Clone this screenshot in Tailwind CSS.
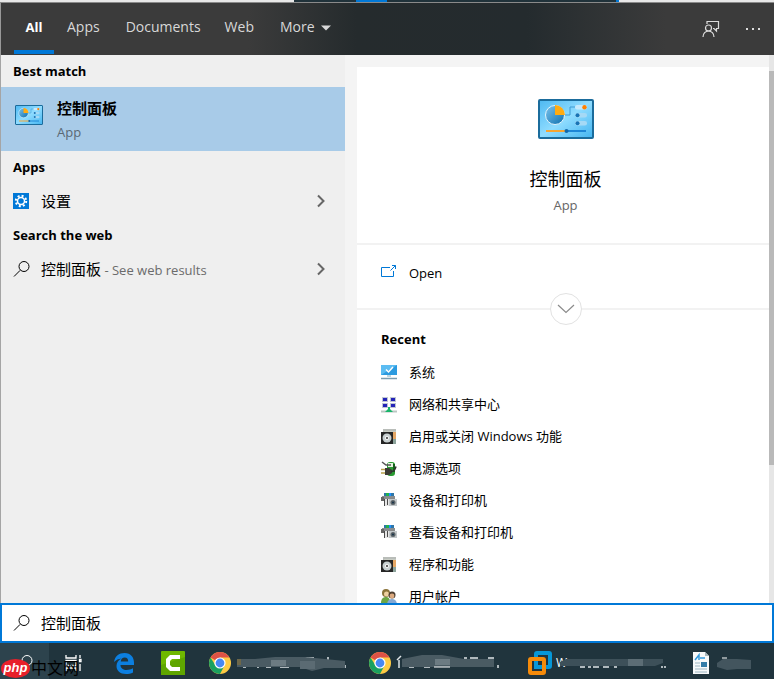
<!DOCTYPE html>
<html lang="en">
<head>
    <meta charset="UTF-8">
    <meta name="viewport" content="width=device-width, initial-scale=1.0">
    <title>Search</title>
    <script src="https://cdn.jsdelivr.net/npm/@tailwindcss/browser@4"></script>
</head>
<body class="font-['Open_Sans','Noto_Sans_CJK_SC',sans-serif] text-[13px] text-black">
    <!-- Shared icons -->
    <svg class="absolute h-0 w-0">
        <symbol id="chevron" viewBox="0 0 10 14"><path d="M2 1.500L7.500 7L2 12.500" fill="none" stroke="#666" stroke-width="2"/></symbol>
        <symbol id="magnifier" viewBox="0 0 18 18"><circle cx="11" cy="6.500" r="5" fill="none" stroke="currentColor"/><path d="M7.200 10.300L1 16.500" stroke="currentColor"/></symbol>
        <linearGradient id="panelBg" x1="0" y1="0" x2="1" y2="1"><stop offset="0" stop-color="#4db8f2"/><stop offset=".5" stop-color="#8fdcff"/><stop offset="1" stop-color="#43b4f0"/></linearGradient>
        <linearGradient id="panelPie" x1="0" y1="0" x2="1" y2="1"><stop offset="0" stop-color="#7cc4ee"/><stop offset="1" stop-color="#0d6fae"/></linearGradient>
        <symbol id="panel" viewBox="0 0 56 40">
            <rect x="1" y="1" width="54" height="38" rx="1" fill="url(#panelBg)" stroke="#1b6c9c" stroke-width="2"/>
            <circle cx="17" cy="16" r="9.500" fill="url(#panelPie)" stroke="#e3f4fc"/>
            <path d="M17 16V6a10 10 0 0 1 10 10z" fill="#ffab10"/>
            <path d="M27 16h5V8h5" fill="none" stroke="#3f9bd3"/>
            <rect x="37" y="6" width="12" height="4.500" rx="2" fill="#c6e9fb"/><circle cx="46.500" cy="8.200" r="2.200" fill="#ff8000"/>
            <rect x="37" y="14" width="12" height="4.500" rx="2" fill="#a5d9f5"/><circle cx="39.500" cy="16.200" r="2" fill="#1873b5"/>
            <rect x="37" y="22" width="12" height="4.500" rx="2" fill="#a5d9f5"/><circle cx="39.500" cy="24.200" r="2" fill="#1873b5"/>
            <path d="M8 32h20" stroke="#f5a533" stroke-width="2"/><path d="M28 32h20" stroke="#1d86d6" stroke-width="2"/><circle cx="28.500" cy="32" r="2" fill="#1268aa"/>
        </symbol>
        <symbol id="package" viewBox="0 0 16 16">
            <path d="M2 0h13v3H2z" fill="#b9bdb9"/><path d="M3 2h12v13H3z" fill="#c9cdc4"/><path d="M11 3h4v8h-4z" fill="#e5a765"/><path d="M12 10h3v5h-3z" fill="#8ca39b"/>
            <path d="M0 3h12v12H0z" fill="#252525"/><circle cx="6" cy="9" r="4.500" fill="#c7cfd0"/><circle cx="6" cy="9" r="2" fill="#f6f6f6"/><circle cx="6" cy="9" r="1" fill="#333"/>
        </symbol>
        <symbol id="devices" viewBox="0 0 16 16">
            <path d="M3 0h10v3H3z" fill="#2e76a8"/><path d="M5 0h3v3H5z" fill="#22b14c"/><path d="M8 0h2v3H8z" fill="#1f8fff"/>
            <path d="M1 3h13v3H1z" fill="#8a8d8e"/><path d="M0 4h3v4H0z" fill="#666"/><path d="M3 6h5v7H3z" fill="#e6e6e6"/><path d="M3 6h1v7H3zM6 6h1v6H6z" fill="#4a4a4a"/>
            <path d="M8 6h8v7H8z" fill="#c3c8ca"/><path d="M9 5h4v1H9z" fill="#888"/><circle cx="12" cy="9.500" r="2.500" fill="#5c6468"/><circle cx="12" cy="9.500" r="1" fill="#16324a"/>
        </symbol>
        <symbol id="chrome" viewBox="0 0 24 24">
            <circle cx="12" cy="12" r="11" fill="#fc4"/>
            <path d="M12 12L2.500 6.500A11 11 0 0 1 21.500 6.500H12z" fill="#de5246"/>
            <path d="M2.500 6.500A11 11 0 0 0 12 23L16.500 14.500L12 12L7.500 14.500z" fill="#1aa15f"/>
            <circle cx="12" cy="12" r="5.600" fill="#fff"/><circle cx="12" cy="12" r="4.400" fill="#4889f4"/>
        </symbol>
    </svg>

    <div class="relative flex h-screen flex-col overflow-hidden bg-[#efefef]">
        <!-- Strip of the window behind -->
        <div class="flex h-[3px] shrink-0 border-b border-[#8a8a8a] bg-[#e8e8e8]">
            <div class="w-[38%]"></div>
            <div class="w-[8%] bg-[#20323a]"></div>
            <div class="w-[4%] bg-[#0078d7]"></div>
            <div class="flex-1 bg-[#20323a]"></div>
            <div class="w-[3px] bg-[#0078d7]"></div>
            <div class="w-[20%]"></div>
        </div>

        <!-- Tabs -->
        <header class="flex h-[52px] shrink-0 items-stretch border-l border-[#999] bg-[linear-gradient(90deg,#3b3b3b_32%,#252b2d_46%,#242b2e_68%,#3b3b3b_86%)] pb-px pl-[13px] text-sm text-[#d8d8d8]">
            <nav class="flex">
                <a href="#all" class="flex w-10 justify-center border-b-4 border-[#0078d7] pt-[15px] text-[13px] font-bold text-white">All</a>
                <a href="#apps" class="ml-[13px] pt-[14px]">Apps</a>
                <a href="#documents" class="ml-[26px] pt-[14px]">Documents</a>
                <a href="#web" class="ml-6 pt-[14px]">Web</a>
            </nav>
            <button class="ml-[26px] flex items-start gap-1.5 pt-[14px]">More
                <svg class="mt-2 h-[6px] w-[10px]" viewBox="0 0 10 6"><path d="M0 .5h10L5 5.500z" fill="#d8d8d8"/></svg>
            </button>
            <div class="ml-auto flex items-center gap-[26px] pr-3">
                <button aria-label="Feedback">
                    <svg class="h-[18px] w-[18px]" viewBox="0 0 18 18" fill="none" stroke="#dcdcdc" stroke-width="1.200"><path d="M5 4V1.500h11.500v7h-2v2.500l-2.500-2.500h-1"/><circle cx="6.500" cy="8" r="3"/><path d="M1 17c0-3.500 2.500-6 5.500-6s5.500 2.500 5.500 6"/></svg>
                </button>
                <button aria-label="Options">
                    <svg class="h-[18px] w-4" viewBox="0 0 16 18" fill="#dcdcdc"><path d="M0 8h2v2H0zM6 8h2v2H6zM12 8h2v2h-2z"/></svg>
                </button>
            </div>
        </header>

        <main class="relative flex min-h-0 flex-1">
            <!-- Result list -->
            <section class="w-[345px] shrink-0 border-l border-[#a5a5a5]">
                <h2 class="h-8 pl-3 leading-8 font-bold">Best match</h2>
                <a href="#control-panel" class="flex h-16 bg-[#a8cbe8] pl-[14px]">
                    <svg class="mt-[18px] h-5 w-7"><use href="#panel"/></svg>
                    <span class="ml-[14px] pt-[9px]">
                        <span class="block text-[15px] leading-6 font-bold">控制面板</span>
                        <span class="block leading-6 text-[#5a6874]">App</span>
                    </span>
                </a>
                <h2 class="h-8 pl-3 leading-8 font-bold">Apps</h2>
                <a href="#settings" class="flex h-9 items-center pr-[19px] pl-3">
                    <svg class="h-4 w-4" viewBox="0 0 16 16"><path d="M0 0h16v16H0z" fill="#0078d7"/><circle cx="8" cy="8" r="5.200" fill="none" stroke="#fff" stroke-width="2" stroke-dasharray="2 2.080"/><circle cx="8" cy="8" r="3.500" fill="#0078d7" stroke="#fff" stroke-width="1.500"/></svg>
                    <span class="ml-3 text-[15px]">设置</span>
                    <svg class="ml-auto h-[14px] w-[10px]"><use href="#chevron"/></svg>
                </a>
                <h2 class="h-8 pl-3 leading-8 font-bold">Search the web</h2>
                <a href="#web-results" class="flex h-9 items-center pr-[19px] pl-3">
                    <svg class="h-[18px] w-[18px]"><use href="#magnifier"/></svg>
                    <span class="ml-[10px]"><span class="text-[15px]">控制面板</span> <span class="text-[#6b6b6b]">- See web results</span></span>
                    <svg class="ml-auto h-[14px] w-[10px]"><use href="#chevron"/></svg>
                </a>
            </section>

            <!-- Details -->
            <section class="flex min-w-0 flex-1 flex-col overflow-hidden bg-[#f4f4f4] pt-3 pl-3">
                <div class="min-h-0 flex-1 bg-white">
                    <div class="flex h-44 flex-col items-center pt-8">
                        <svg class="h-10 w-14"><use href="#panel"/></svg>
                        <h1 class="mt-[26px] text-lg leading-7">控制面板</h1>
                        <p class="leading-6 text-[#666]">App</p>
                    </div>
                    <div class="relative h-[67px] border-y-2 border-[#f2f2f2] pt-4 pl-6">
                        <a href="#open" class="flex items-center leading-6">
                            <svg class="mb-1 h-[14px] w-4" viewBox="0 0 16 14" fill="none" stroke="#0078d7"><path d="M9 3.500H.5v9h12V7"/><path d="M9.500 6.500L14.500 1.500M11 1.500h3.500V5"/></svg>
                            <span class="ml-3">Open</span>
                        </a>
                        <button aria-label="Expand" class="absolute -bottom-[17px] left-1/2 flex h-8 w-8 -translate-x-1/2 items-center justify-center rounded-full border border-[#e2e2e2] bg-white">
                            <svg class="h-[10px] w-[18px]" viewBox="0 0 18 10"><path d="M1 1l8 7.500L17 1" fill="none" stroke="#8a8a8a" stroke-width="1.200"/></svg>
                        </button>
                    </div>
                    <div class="pl-6">
                        <h2 class="pt-[17px] pb-[6px] leading-6 font-bold">Recent</h2>
                        <ul>
                            <li><a href="#system" class="flex h-8 items-center gap-3">
                                <svg class="h-4 w-4" viewBox="0 0 16 16"><path d="M0 0h16v10H0z" fill="#2c9be0"/><path d="M0 0h16L0 10z" fill="#5bbcf2"/><path d="M5 4.500l2.500 2.500L12 2" fill="none" stroke="#fff" stroke-width="1.500"/><path d="M6 10h4v2H6z" fill="#bcd6e2"/><path d="M0 13.500h16" stroke="#7b9db0" stroke-width="1.500"/></svg>
                                系统</a></li>
                            <li><a href="#network" class="flex h-8 items-center gap-3">
                                <svg class="h-4 w-4" viewBox="0 0 16 16"><path d="M1 0h6v5H1zM9 0h6v5H9zM1 6h6v5H1zM9 6h6v5H9z" fill="#bfc6d2"/><path d="M2 1h4v3H2zM10 1h4v3h-4zM2 7h4v3H2zM10 7h4v3h-4z" fill="#2424b8"/><path d="M0 14.500h16" stroke="#bac7c2" stroke-width="2"/><path d="M7 10h2v2l3 3H4l3-3z" fill="#18b56a"/></svg>
                                网络和共享中心</a></li>
                            <li><a href="#features" class="flex h-8 items-center gap-3">
                                <svg class="h-4 w-4"><use href="#package"/></svg>
                                启用或关闭 Windows 功能</a></li>
                            <li><a href="#power" class="flex h-8 items-center gap-3">
                                <svg class="h-4 w-4" viewBox="0 0 16 16"><rect x="6" y="1" width="8" height="14" rx="3" fill="#2a9b32"/><path d="M7 2h5v4H7z" fill="#e5f2df"/><path d="M12 3h2v8h-2z" fill="#155f1b"/><path d="M1 1l4 3h5" fill="none" stroke="#555" stroke-width="1.500"/><path d="M4 7h4l3 2v3l-3 2H4z" fill="#3c3c36"/><path d="M0 8.500h4M0 12h4" stroke="#b8a14b" stroke-width="1.500"/><path d="M10 10.500c3 0 4-1 5-5" fill="none" stroke="#333" stroke-width="1.500"/></svg>
                                电源选项</a></li>
                            <li><a href="#devices" class="flex h-8 items-center gap-3">
                                <svg class="h-4 w-4"><use href="#devices"/></svg>
                                设备和打印机</a></li>
                            <li><a href="#view-devices" class="flex h-8 items-center gap-3">
                                <svg class="h-4 w-4"><use href="#devices"/></svg>
                                查看设备和打印机</a></li>
                            <li><a href="#programs" class="flex h-8 items-center gap-3">
                                <svg class="h-4 w-4"><use href="#package"/></svg>
                                程序和功能</a></li>
                            <li><a href="#accounts" class="flex h-8 items-center gap-3">
                                <svg class="h-4 w-4" viewBox="0 0 16 16"><circle cx="5" cy="4" r="4" fill="#8b7339"/><circle cx="5.500" cy="5" r="2.500" fill="#eed0a0"/><path d="M0 14c0-4 2-6 5-6s4 2 4 6z" fill="#6ca544"/><circle cx="11" cy="6" r="3.500" fill="#4f4032"/><circle cx="11" cy="7" r="2.400" fill="#dcaa80"/><path d="M6 16c0-4 2-6 5-6s5 2 5 6z" fill="#84a9d4"/></svg>
                                用户帐户</a></li>
                        </ul>
                    </div>
                </div>
            </section>

            <!-- Scrollbar, drawn over the details pane -->
            <div class="absolute inset-y-0 right-0 w-[5px] bg-[#e6e6e6] pt-4">
                <div class="h-[74%] bg-[#b9b9b9]"></div>
            </div>
        </main>

        <!-- Search box -->
        <label class="flex h-10 shrink-0 items-center border-2 border-[#0078d7] bg-white pl-[11px]">
            <svg class="h-[18px] w-[18px]"><use href="#magnifier"/></svg>
            <input type="text" value="控制面板" aria-label="Search" class="ml-[10px] min-w-0 flex-1 text-[15px] outline-none">
        </label>

        <!-- Taskbar -->
        <footer class="flex h-9 shrink-0 items-center bg-[#20343d] pt-1 text-xs text-white">
            <button aria-label="Search" class="-mt-1 flex h-9 w-[49px] items-center justify-center bg-[#2d434d] pt-1"><svg class="h-[18px] w-[18px]"><use href="#magnifier"/></svg></button>
            <button aria-label="Task view" class="flex w-[49px] justify-center">
                <svg class="h-4 w-[18px]" viewBox="0 0 18 16" fill="none" stroke="#fff" stroke-width="1.300"><path d="M1 0v3h10V0M1 16v-3h10v3M1 5.500h10v5H1zM15 0v3M15 9v7"/><path d="M14.500 4.500h1.500v2h-1.500z"/></svg>
            </button>
            <button aria-label="Edge" class="flex w-[51px] justify-center">
                <svg class="h-[21px] w-5" viewBox="0 0 20 21"><path d="M0 9C1 3 5 0 10.500 0C17 0 20 4.500 20 9.500V12H6.500c0 3.500 3 5 6 5c2.500 0 4.500-.5 6.500-1.700V19.500c-2 1-4.500 1.500-7 1.500C6 21 2.500 17.500 2.500 13C2.500 9.500 4.500 7 7.500 5.500C4.500 5.800 2 7 0 9zM6.800 8.500h7.400C14.200 6 13 4.500 10.800 4.500C8.500 4.500 7 6 6.800 8.500z" fill="#0c7fe0" fill-rule="evenodd"/></svg>
            </button>
            <button aria-label="Recorder" class="flex w-[48px] justify-center">
                <svg class="h-6 w-6" viewBox="0 0 24 24"><rect width="24" height="24" rx="1" fill="#6fb800"/><path d="M0 14L24 6V24H0z" fill="#5fa600"/><path d="M19 4H9L5 8v8l4 4h10v-4h-8l-2-2v-4l2-2h8z" fill="#fff"/></svg>
            </button>
            <button aria-label="Chrome" class="ml-[11px] flex w-40 items-center gap-1">
                <svg class="h-6 w-6"><use href="#chrome"/></svg>
                <svg class="h-6 w-[112px]" viewBox="0 0 112 24"><path d="M2 15h3M7 16h3M12 15h4M22 14v3M30 16h5M37 15h4M44 16h9M66 7h12M71 6v4M92 6v3M109 14v3" stroke="#e0e5e7" stroke-width="1.500"/><path d="M1 8h18l20-2h30l40 4v7H88l-12 3-12-4H1z" fill="#4a5b63"/><path d="M35 9h15v6H35z" fill="#6c7b82"/><path d="M64 10h15v8H64z" fill="#5b6b73"/><path d="M1 8h4v6H1z" fill="#6d6749"/></svg>
            </button>
            <button aria-label="Chrome" class="flex w-40 items-center gap-1">
                <svg class="h-6 w-6"><use href="#chrome"/></svg>
                <svg class="h-6 w-[112px]" viewBox="0 0 112 24"><path d="M5 5L1 9M3 9v8M13 16h5M21 15h5M28 16h6M68 7h3M74 7h8M92 7h6M102 14v3" stroke="#e0e5e7" stroke-width="1.500"/><path d="M6 8l20-4h20l22 4h30v8H6z" fill="#4a5b63"/><path d="M39 8h15v6H39z" fill="#6c7b82"/><path d="M38 16h16" stroke="#fff"/></svg>
            </button>
            <button aria-label="Virtual machines" class="flex w-[162px] items-center gap-1">
                <svg class="h-6 w-6" viewBox="0 0 24 24" fill="none" stroke-width="4"><rect x="8" y="2" width="14" height="14" rx="1" stroke="#0697d8"/><rect x="2" y="8" width="14" height="14" rx="1" stroke="#f68b0a"/><path d="M8 10v6h6" stroke="#0697d8"/></svg>
                <span class="relative">W
                    <svg class="absolute top-0 left-1 h-4 w-[110px]" viewBox="0 0 110 16"><path d="M20 12h5M28 12h3M33 12h6M43 12h6M54 12h3M101 12h2M104 12h2" stroke="#e0e5e7" stroke-width="1.500"/><path d="M0 7l6-3h97v4l-8 3H0z" fill="#3d5059"/><path d="M68 4h15v7H68z" fill="#5c6d75"/></svg>
                </span>
            </button>
            <button aria-label="Document" class="ml-[3px] flex items-center gap-2">
                <svg class="h-[22px] w-4" viewBox="0 0 16 22"><path d="M0 0h12l4 4v18H0z" fill="#f7f9fa"/><path d="M12 0v4h4z" fill="#a9b8bd"/><path d="M2 8l4-5v5M7 6h5" fill="none" stroke="#3399dc" stroke-width="1.500"/><path d="M2 11h5M2 14h5M2 17h12M2 20h12" stroke="#9db6c2"/><path d="M8 10h6v5H8z" fill="#337ca8"/></svg>
                <svg class="h-4 w-[34px]" viewBox="0 0 34 16"><path d="M5 3h5" stroke="#fff"/><path d="M0 8l6-4h14l14 1v9H20l-10 1-10-3z" fill="#43555e"/></svg>
            </button>
        </footer>

        <!-- Site watermark -->
        <div class="absolute bottom-0 left-px flex items-center gap-px text-black">
            <span class="flex h-[19px] w-[29px] items-center justify-center rounded-[50%] bg-[#e8202a] pb-0.5 font-['Liberation_Sans',sans-serif] text-[13px] leading-none font-bold text-white italic">php</span>
            <span class="text-base leading-[22px]">中文网</span>
        </div>
    </div>
</body>
</html>
